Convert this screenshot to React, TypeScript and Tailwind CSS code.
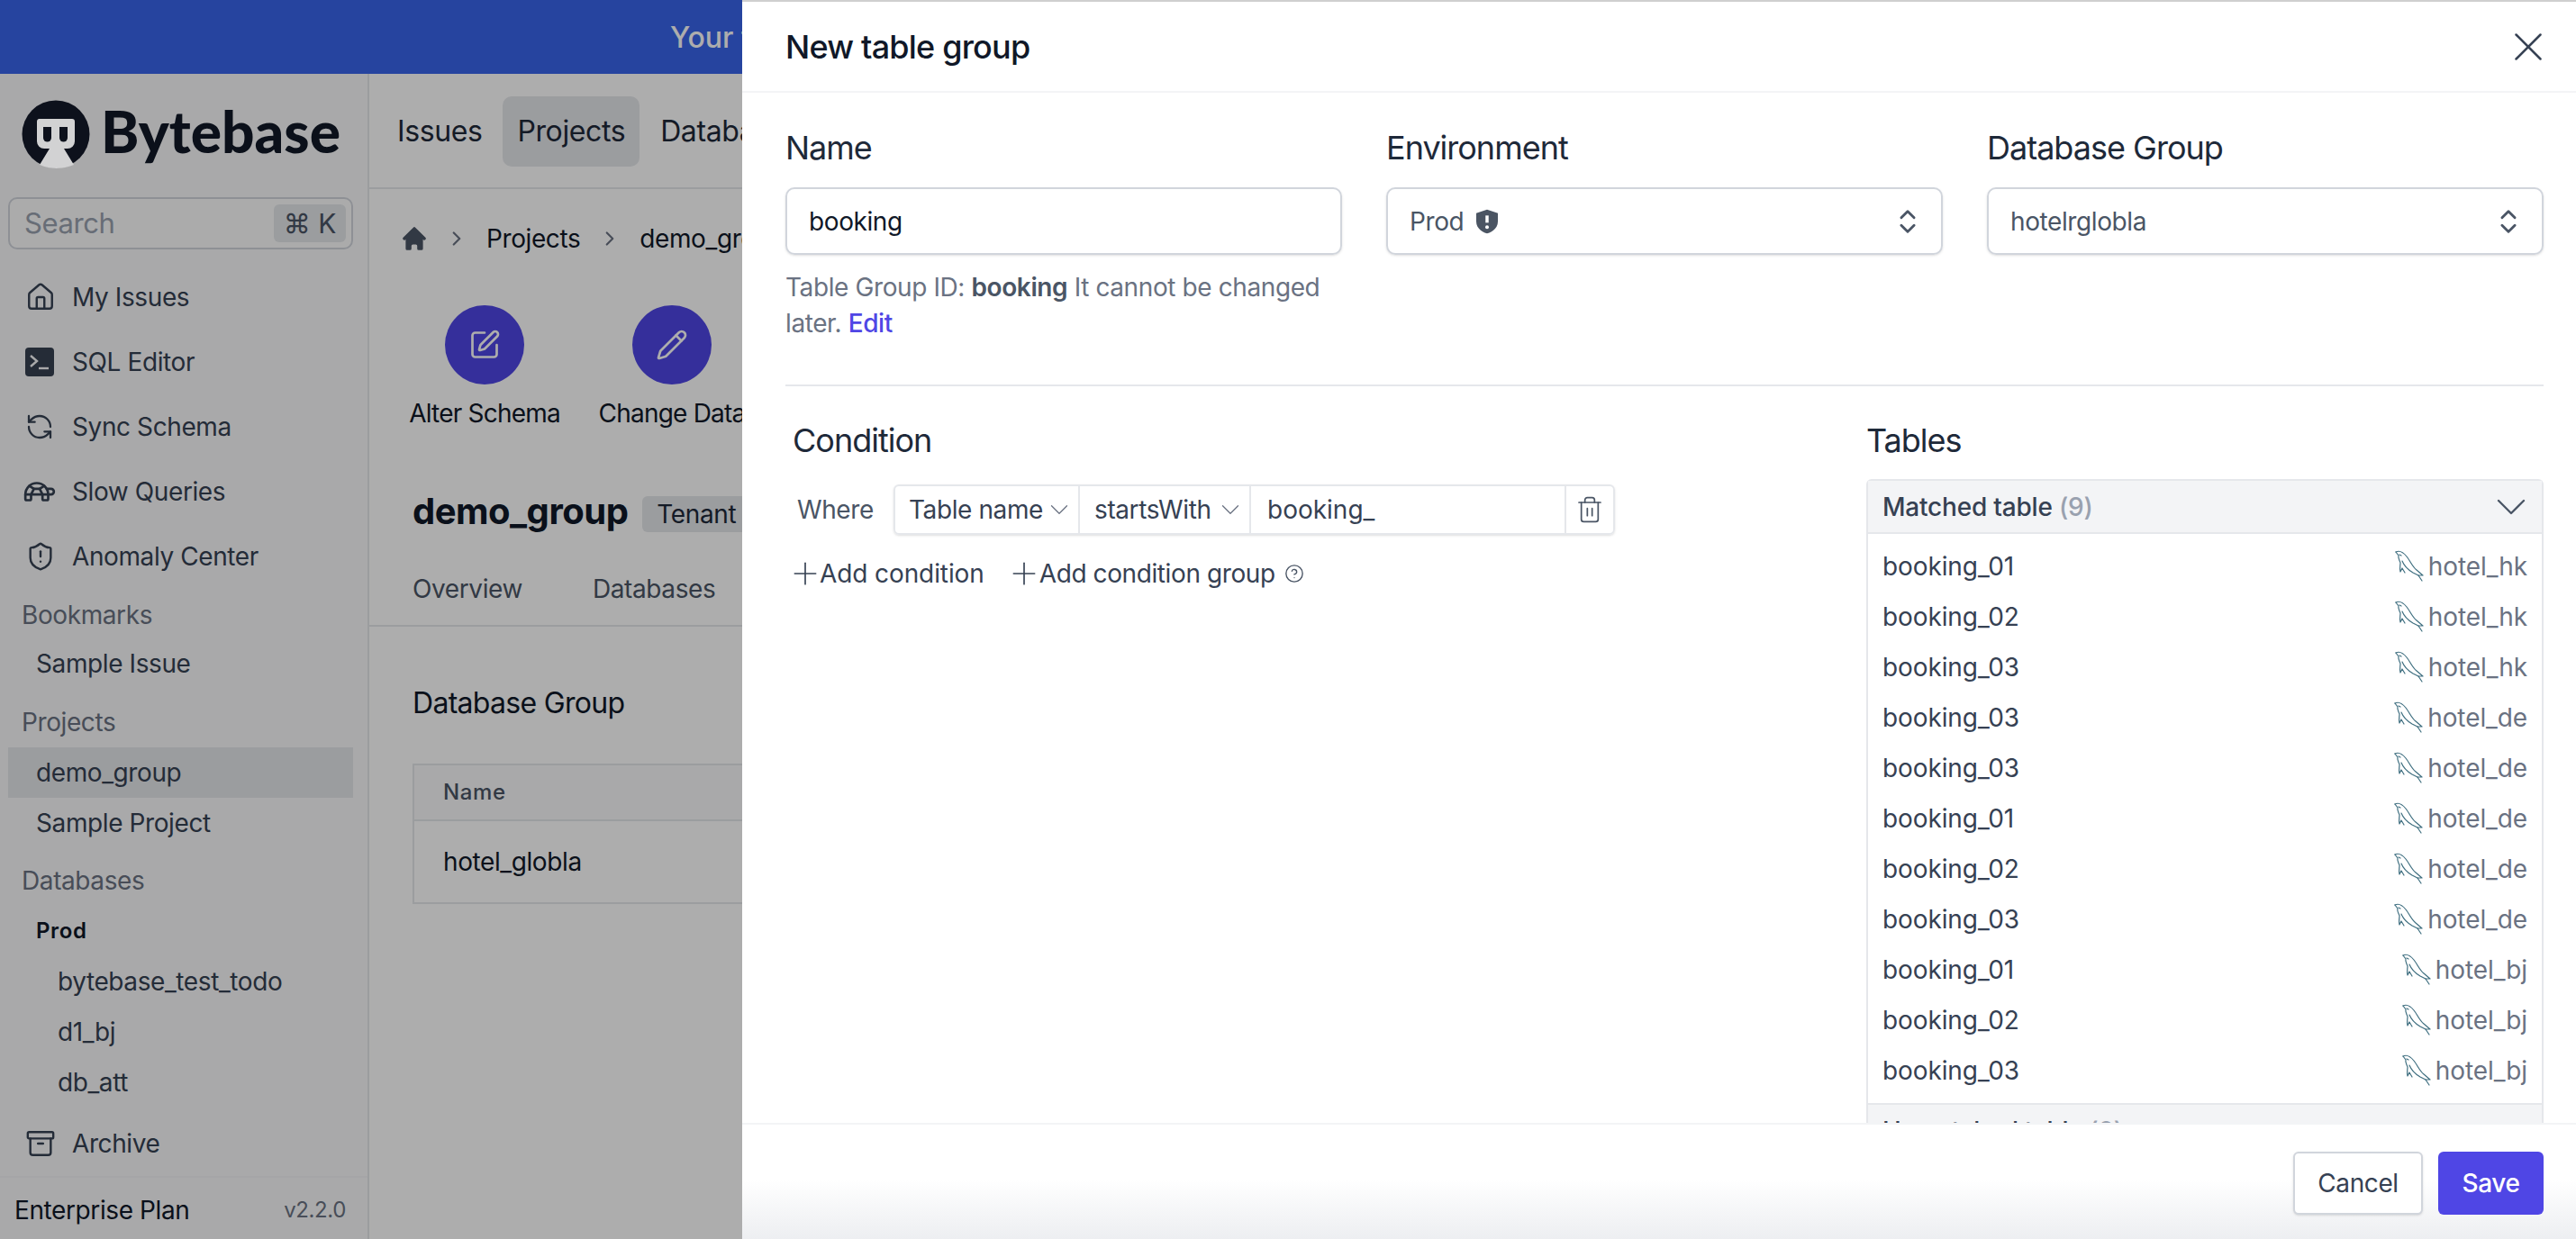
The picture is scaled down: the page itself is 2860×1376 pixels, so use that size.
import React from "react";
import { House, RefreshCcw, Turtle, ShieldAlert, Archive, SquarePen, Pencil, ChevronRight, ChevronsUpDown, ChevronDown, Trash2, X, Plus, CircleHelp } from "lucide-react";
import { HiHome } from "react-icons/hi";

function Dolphin() {
  return (
    <svg width="34" height="36" viewBox="0 0 34 36" fill="none" stroke="#3f6f80" strokeWidth="1.2" strokeLinejoin="round" strokeLinecap="round" className="shrink-0">
      <path d="M1 2 C5 0 9 2 13 7 C17 12 19 18 24 22 L31 28 L26 28 L30 34" />
      <path d="M1 2 L4 6 C3 9 5 11 6 14 C6 17 5 20 6 24 L8 20 L11 25" />
      <path d="M8 12 C10 17 15 22 20 25 L26 28" />
      <path d="M5 5 L7 6" />
    </svg>
  );
}

function SqlIcon() {
  return (
    <svg width="32" height="32" viewBox="0 0 32 32" className="shrink-0">
      <rect x="0" y="0" width="32" height="32" rx="4" fill="#374151" />
      <path d="M6 9 L13 15 L6 21" fill="none" stroke="#f9fafb" strokeWidth="2.4" />
      <path d="M15 23 H26" fill="none" stroke="#f9fafb" strokeWidth="2.4" />
    </svg>
  );
}

function ProdShield() {
  return (
    <svg width="32" height="32" viewBox="0 0 24 24" className="shrink-0">
      <path d="M12 2 L21 5 V12 C21 17 17 20.5 12 22 C7 20.5 3 17 3 12 V5 Z" fill="#4b5563" />
      <path d="M12 7 V13" stroke="#fff" strokeWidth="2.6" />
      <circle cx="12" cy="16.6" r="1.5" fill="#fff" />
    </svg>
  );
}

function NavItem({ icon, label }: { icon: React.ReactNode; label: string }) {
  return (
    <div className="h-[72px] flex items-center pl-[28px] text-[28px] text-gray-700">
      <span className="w-[52px] shrink-0 flex items-center">{icon}</span>
      <span>{label}</span>
    </div>
  );
}

function SubItem({ label, active, deep, bold }: { label: string; active?: boolean; deep?: boolean; bold?: boolean }) {
  return (
    <div className={`${deep ? "pl-[55px]" : "pl-[31px]"} h-[56px] ml-[9px] mr-[16px] flex items-center ${bold ? "font-semibold text-gray-900 text-[24px] tracking-[0.6px]" : "text-gray-700 text-[28px]"} ${active ? "bg-gray-200" : ""}`}>
      <span>{label}</span>
    </div>
  );
}

const rows: [string, string][] = [
  ["booking_01", "hotel_hk"],
  ["booking_02", "hotel_hk"],
  ["booking_03", "hotel_hk"],
  ["booking_03", "hotel_de"],
  ["booking_03", "hotel_de"],
  ["booking_01", "hotel_de"],
  ["booking_02", "hotel_de"],
  ["booking_03", "hotel_de"],
  ["booking_01", "hotel_bj"],
  ["booking_02", "hotel_bj"],
  ["booking_03", "hotel_bj"],
];

export default function App() {
  return (
    <div className="relative w-[2860px] h-[1376px] overflow-hidden bg-white font-['Inter',sans-serif] text-gray-900 tracking-[-0.4px]">
      {/* underlying page */}
      <div className="flex flex-col h-full">
        <div className="h-[82px] shrink-0 bg-[#3865ea] text-white text-[32px] font-medium flex items-center pl-[744px] pt-[2px] tracking-normal">
          Your trial has ended
        </div>
        <div className="flex flex-1 min-h-0">
          <aside className="w-[410px] shrink-0 bg-gray-50 border-r-2 border-gray-200 flex flex-col">
            <div className="h-[137px] flex items-center pl-[24px] gap-[12px] shrink-0">
              <svg width="76" height="78" viewBox="0 0 76 78" className="relative z-10 shrink-0 -mt-[2px]">
                <circle cx="38" cy="38" r="37.5" fill="#0d111c" />
                <path d="M19 21 H56 a3 3 0 0 1 3 3 V46 a8 8 0 0 1 -8 8 H47 L58 72 Q38 80 20 72 L31 54 H25 a8 8 0 0 1 -8 -8 V24 a3 3 0 0 1 2 -3 Z" fill="#d2d2d3" />
                <path d="M24 30 H33 V42 a4.5 4.5 0 0 1 -9 0 Z" fill="#0d111c" />
                <path d="M42 30 H51 V42 a4.5 4.5 0 0 1 -9 0 Z" fill="#0d111c" />
              </svg>
              <span className="-mt-[10px] font-['Lato',sans-serif] font-black text-[64px] leading-none tracking-normal text-[#111827]">Bytebase</span>
            </div>
            <div className="ml-[9px] mr-[16px] h-[58px] shrink-0 rounded-[10px] border-2 border-gray-300 bg-white/50 flex items-center justify-between pl-[16px] pr-[6px]">
              <span className="text-[31px] text-gray-400">Search</span>
              <span className="h-[42px] w-[80px] rounded-md bg-gray-200 flex items-center justify-center text-[30px] text-gray-600 tracking-normal">⌘ K</span>
            </div>
            <div className="h-[17px] shrink-0" />
            <NavItem icon={<House size={34} strokeWidth={1.7} />} label="My Issues" />
            <NavItem icon={<SqlIcon />} label="SQL Editor" />
            <NavItem icon={<RefreshCcw size={32} strokeWidth={1.7} />} label="Sync Schema" />
            <NavItem icon={<Turtle size={38} strokeWidth={1.7} className="-ml-[3px]" />} label="Slow Queries" />
            <NavItem icon={<ShieldAlert size={34} strokeWidth={1.7} />} label="Anomaly Center" />
            <div className="h-[55px] pl-[24px] pt-[2px] flex items-center text-[28px] text-gray-500">Bookmarks</div>
            <SubItem label="Sample Issue" />
            <div className="h-[65px] pl-[24px] pt-[8px] flex items-center text-[28px] text-gray-500">Projects</div>
            <SubItem label="demo_group" active />
            <SubItem label="Sample Project" />
            <div className="h-[64px] pl-[24px] pt-[8px] flex items-center text-[28px] text-gray-500">Databases</div>
            <SubItem label="Prod" bold />
            <SubItem label="bytebase_test_todo" deep />
            <SubItem label="d1_bj" deep />
            <SubItem label="db_att" deep />
            <div className="h-[4px] shrink-0" />
            <NavItem icon={<Archive size={34} strokeWidth={1.7} />} label="Archive" />
            <div className="flex-1 border-t-2 border-gray-100 flex items-center justify-between pl-[16px] pr-[24px] pt-[4px]">
              <span className="text-[28px] text-gray-900">Enterprise Plan</span>
              <span className="text-[24px] text-gray-500">v2.2.0</span>
            </div>
          </aside>
          <main className="flex-1 min-w-0 bg-white overflow-hidden">
            <div className="h-[128px] border-b-2 border-gray-200 flex items-center pl-[31px] pt-[2px] text-[32px] text-gray-800">
              <span className="mr-[23px]">Issues</span>
              <span className="h-[78px] px-[16px] rounded-[10px] bg-gray-200 flex items-center">Projects</span>
              <span className="ml-[23px]">Databases</span>
            </div>
            <div className="h-[108px] flex items-center pl-[34px] pt-[2px] text-[28px] text-gray-900">
              <HiHome size={32} className="shrink-0 text-gray-600" />
              <ChevronRight size={26} className="ml-[18px] mr-[20px] text-gray-500" />
              <span>Projects</span>
              <ChevronRight size={26} className="ml-[20px] mr-[20px] text-gray-500" />
              <span>demo_group</span>
            </div>
            <div className="flex pl-[46px] h-[202px]">
              <div className="w-[164px] flex flex-col items-center">
                <span className="w-[88px] h-[88px] mt-[21px] rounded-full bg-[#4f46e5] flex items-center justify-center"><SquarePen size={36} stroke="#fff" strokeWidth={1.8} /></span>
                <span className="mt-[11px] text-[28px] tracking-[-0.8px] whitespace-nowrap text-gray-900">Alter Schema</span>
              </div>
              <div className="w-[208px] ml-[22px] flex flex-col items-center shrink-0">
                <span className="w-[88px] h-[88px] mt-[21px] rounded-full bg-[#4f46e5] flex items-center justify-center"><Pencil size={36} stroke="#fff" strokeWidth={1.8} /></span>
                <span className="mt-[11px] text-[28px] tracking-[-0.8px] whitespace-nowrap text-gray-900">Change Data</span>
              </div>
            </div>
            <div className="h-[96px] flex items-center pl-[48px]">
              <span className="text-[40px] font-bold text-gray-900 leading-none tracking-[-0.5px]">demo_group</span>
              <span className="ml-[16px] mt-[6px] h-[40px] pl-[16px] pr-[16px] rounded-md bg-gray-200 flex items-center text-[28px] text-gray-800">Tenant</span>
            </div>
            <div className="h-[80px] border-b-2 border-gray-200 flex items-center pl-[48px] pb-[2px] gap-[78px] text-[28px] text-gray-600">
              <span>Overview</span>
              <span>Databases</span>
            </div>
            <div className="pl-[48px] pt-[63px]">
              <div className="text-[32px] leading-[44px] tracking-[-0.7px] text-gray-900">Database Group</div>
              <div className="mt-[45px] w-[900px] border-2 border-gray-200">
                <div className="h-[62px] border-b-2 border-gray-200 bg-gray-50 flex items-center pl-[32px] text-[24px] font-medium tracking-wide text-gray-600">Name</div>
                <div className="h-[90px] flex items-center pl-[32px] text-[28px] text-gray-900">hotel_globla</div>
              </div>
            </div>
          </main>
        </div>
      </div>

      {/* modal mask */}
      <div className="absolute inset-0 bg-black/[0.32]" />

      {/* drawer */}
      <div className="absolute top-0 right-0 bottom-0 left-[824px] z-20 bg-white flex flex-col">
        <div className="h-[2px] bg-[#cfcfcf] shrink-0" />
        <header className="h-[101px] shrink-0 border-b-2 border-gray-100 flex items-center justify-between pl-[48px] pr-[36px]">
          <span className="text-[36px] font-medium tracking-[-0.8px] text-gray-900">New table group</span>
          <X size={54} strokeWidth={1.1} className="text-gray-700 -mr-[10px]" />
        </header>

        <div className="flex-1 min-h-0 overflow-hidden pl-[48px] pr-[36px]">
          <div className="grid grid-cols-3 gap-x-[49px] pt-[39px]">
            <div>
              <div className="text-[36px] leading-[44px] tracking-[-1px] text-gray-800">Name</div>
              <div className="mt-[22px] h-[75px] rounded-[10px] border-2 border-gray-300 shadow-sm flex items-center pl-[24px] text-[28px] text-gray-900">booking</div>
              <p className="mt-[16px] text-[28px] leading-[40px] text-gray-500">
                Table Group ID: <b className="font-semibold text-gray-600">booking</b> It cannot be changed later. <span className="text-[#4f46e5] font-medium">Edit</span>
              </p>
            </div>
            <div>
              <div className="text-[36px] leading-[44px] tracking-[-1px] text-gray-800">Environment</div>
              <div className="mt-[22px] h-[75px] rounded-[10px] border-2 border-gray-300 shadow-sm flex items-center justify-between pl-[24px] pr-[20px] text-[28px] text-gray-600">
                <span className="flex items-center gap-[10px]">Prod <ProdShield /></span>
                <ChevronsUpDown size={34} strokeWidth={2} className="text-gray-600" />
              </div>
            </div>
            <div>
              <div className="text-[36px] leading-[44px] tracking-[-1px] text-gray-800">Database Group</div>
              <div className="mt-[22px] h-[75px] rounded-[10px] border-2 border-gray-300 shadow-sm flex items-center justify-between pl-[24px] pr-[20px] text-[28px] text-gray-600">
                <span>hotelrglobla</span>
                <ChevronsUpDown size={34} strokeWidth={2} className="text-gray-600" />
              </div>
            </div>
          </div>

          <div className="mt-[48px] border-t-2 border-gray-200 flex pt-[36px]">
            <div className="w-[1200px] shrink-0 pl-[8px]">
              <div className="text-[36px] leading-[48px] tracking-[-1px] text-gray-800">Condition</div>
              <div className="mt-[25px] flex items-center">
                <span className="ml-[5px] w-[107px] text-[28px] text-gray-600">Where</span>
                <div className="h-[56px] w-[801px] rounded-md border-2 border-gray-200 shadow-sm flex items-center text-[28px] text-gray-700">
                  <div className="w-[205px] h-full border-r-2 border-gray-200 flex items-center justify-between pl-[15px] pr-[4px] whitespace-nowrap">
                    <span>Table name</span><ChevronDown size={34} strokeWidth={0.9} className="text-gray-500" />
                  </div>
                  <div className="w-[190px] h-full border-r-2 border-gray-200 flex items-center justify-between pl-[16px] pr-[4px] whitespace-nowrap">
                    <span>startsWith</span><ChevronDown size={34} strokeWidth={0.9} className="text-gray-500" />
                  </div>
                  <div className="w-[350px] h-full border-r-2 border-gray-200 flex items-center pl-[18px] tracking-normal">booking_</div>
                  <div className="flex-1 flex items-center justify-center"><Trash2 size={32} strokeWidth={1.3} className="text-gray-600" /></div>
                </div>
              </div>
              <div className="mt-[22px] flex items-center text-[28px] text-gray-700">
                <Plus size={40} strokeWidth={1} className="-ml-[6px] -mr-[4px]" />
                <span className="tracking-[-0.1px]">Add condition</span>
                <Plus size={40} strokeWidth={1} className="ml-[24px] -mr-[3px]" />
                <span>Add condition group</span>
                <CircleHelp size={22} strokeWidth={1.5} className="ml-[10px] text-gray-600" />
              </div>
            </div>
            <div className="flex-1 min-w-0">
              <div className="text-[36px] leading-[48px] tracking-[-1px] text-gray-800">Tables</div>
              <div className="mt-[19px] border-x-2 border-t-2 border-gray-200 rounded-t-md">
                <div className="h-[59px] bg-gray-100 border-b-2 border-gray-200 flex items-center justify-between pl-[16px] pr-[6px] text-[28px] tracking-[-0.2px]">
                  <span className="font-medium text-gray-700">Matched table <span className="text-gray-400">(9)</span></span>
                  <ChevronDown size={56} strokeWidth={1} className="text-gray-600" />
                </div>
                <div className="py-[8px]">
                  {rows.map(([t, db], i) => (
                    <div key={i} className="h-[56px] flex items-center justify-between pl-[16px] pr-[16px] text-[28px] tracking-[-0.1px]">
                      <span className="text-gray-700">{t}</span>
                      <span className="flex items-center text-gray-500"><Dolphin /><span className="ml-[3px]">{db}</span></span>
                    </div>
                  ))}
                </div>
                <div className="h-[60px] bg-gray-100 border-t-2 border-gray-200 flex items-center pl-[16px] text-[28px]">
                  <span className="font-medium text-gray-700">Unmatched table <span className="text-gray-400">(0)</span></span>
                </div>
              </div>
            </div>
          </div>
        </div>

        <footer className="relative h-[129px] shrink-0 border-t-2 border-gray-100 bg-white flex items-start justify-end pt-[30px] pr-[36px] gap-[17px] text-[28px]">
          <div className="absolute left-0 right-0 bottom-0 h-[66px] bg-gradient-to-b from-white to-gray-200/70" />
          <button className="relative w-[144px] h-[70px] rounded-md border-2 border-gray-300 bg-white shadow-sm text-gray-700">Cancel</button>
          <button className="relative w-[117px] h-[70px] rounded-md bg-[#4f46e5] text-white font-medium">Save</button>
        </footer>
      </div>
    </div>
  );
}
